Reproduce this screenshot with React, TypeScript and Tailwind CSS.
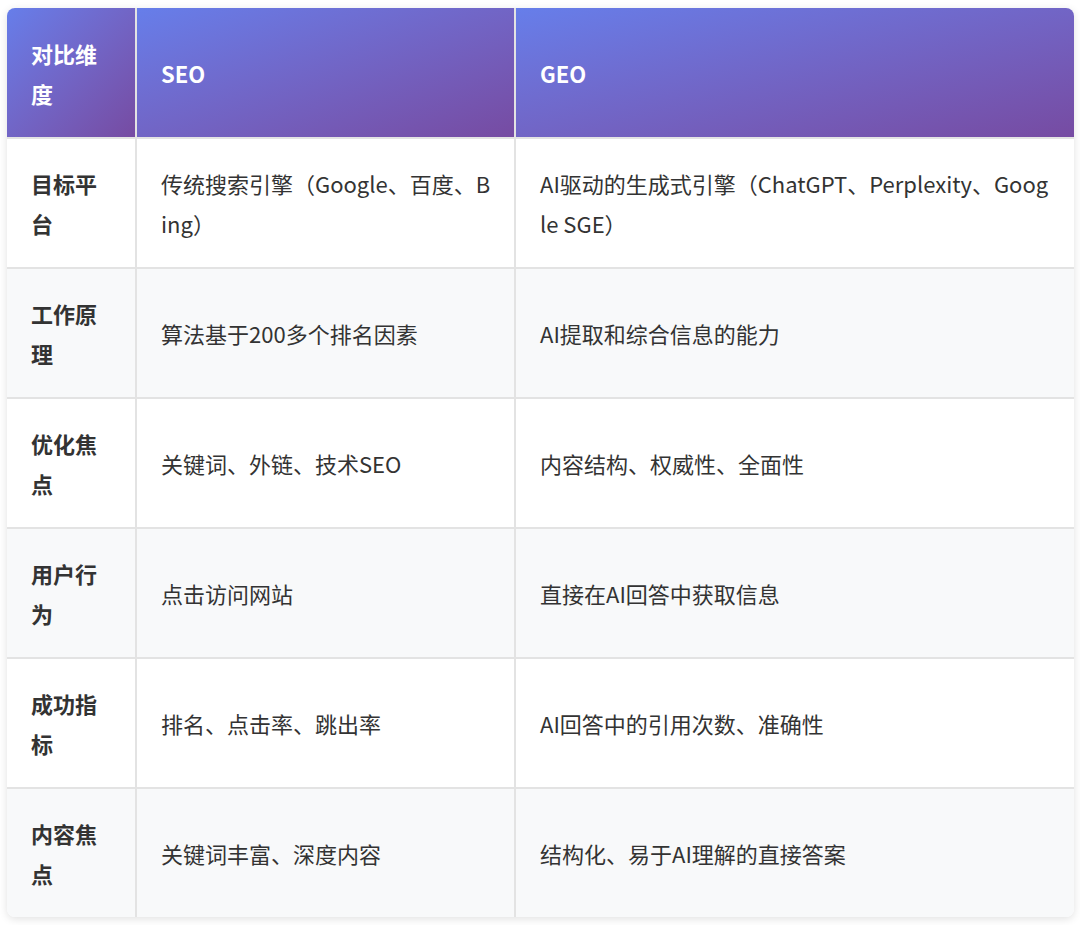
const rows = [
  ["目标平台", "传统搜索引擎（Google、百度、Bing）", "AI驱动的生成式引擎（ChatGPT、Perplexity、Google SGE）"],
  ["工作原理", "算法基于200多个排名因素", "AI提取和综合信息的能力"],
  ["优化焦点", "关键词、外链、技术SEO", "内容结构、权威性、全面性"],
  ["用户行为", "点击访问网站", "直接在AI回答中获取信息"],
  ["成功指标", "排名、点击率、跳出率", "AI回答中的引用次数、准确性"],
  ["内容焦点", "关键词丰富、深度内容", "结构化、易于AI理解的直接答案"],
]

const head = ["对比维度", "SEO", "GEO"]

export default function App() {
  return (
    <div className="w-[1080px] h-[925px] bg-white pt-[8px] pl-[7px]" style={{ fontFamily: '"Noto Sans CJK SC", "Noto Sans", sans-serif' }}>
      <div className="w-[1067px] rounded-lg overflow-hidden shadow-[0_2px_8px_rgba(0,0,0,0.12)] grid grid-cols-[128px_379px_560px] text-[22px] leading-[40px] text-[#333]">
        {head.map((h, i) => (
          <div key={h} className={`h-[129px] flex items-center pl-[24px] pr-[20px] font-bold text-white bg-gradient-to-br from-[#667eea] to-[#764ba2] ${i > 0 ? "border-l-2 border-[#e3e3e3]" : ""}`}>
            <span className="break-all">{h}</span>
          </div>
        ))}
        {rows.map((r, ri) =>
          r.map((c, ci) => (
            <div
              key={ri + "-" + ci}
              className={`h-[130px] flex items-center pl-[24px] pr-[20px] border-t-2 border-[#e3e3e3] ${ci > 0 ? "border-l-2" : ""} ${ri % 2 === 1 ? "bg-[#f8f9fa]" : "bg-white"} ${ci === 0 ? "font-bold" : ""}`}
            >
              <span className="break-all">{c}</span>
            </div>
          ))
        )}
      </div>
    </div>
  )
}
